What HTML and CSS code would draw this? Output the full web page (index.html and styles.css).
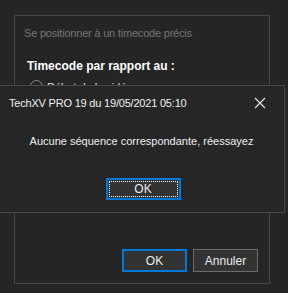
FILE: index.html
```html
<!DOCTYPE html>
<html lang="fr">
<head>
    <meta charset="UTF-8">
    <title>Se positionner à un timecode précis</title>
    <link rel="stylesheet" href="styles.css">
</head>
<body>
    <div class="panel">
        <div class="panel-title">Se positionner à un timecode précis</div>
        <div class="group-label">Timecode par rapport au :</div>
        <label class="radio-row">
            <span class="radio"></span>
            <span>Début de la vidéo</span>
        </label>
        <div class="panel-actions">
            <button class="btn btn-default">OK</button>
            <button class="btn">Annuler</button>
        </div>
    </div>

    <!-- Boîte de message par-dessus -->
    <div class="msgbox">
        <div class="msgbox-head">
            <span class="msgbox-title">TechXV PRO 19 du 19/05/2021 05:10</span>
            <svg class="msgbox-close" width="12" height="12" viewBox="0 0 12 12">
                <path d="M1 1 L11 11 M11 1 L1 11" stroke="#e0e0e0" stroke-width="1.2" fill="none"/>
            </svg>
        </div>
        <div class="msgbox-text">Aucune séquence correspondante, réessayez</div>
        <div class="msgbox-actions">
            <button class="btn btn-focus"><span class="focus-rect">OK</span></button>
        </div>
    </div>
</body>
</html>
```

FILE: styles.css
```css
body {
    margin: 0;
    padding: 15px 0 0 14px;
    width: 288px;
    height: 293px;
    box-sizing: border-box;
    background-color: #252525;
    font-family: 'Liberation Sans', Arial, sans-serif;
    font-size: 11px;
    color: #e8e8e8;
    position: relative;
    overflow: hidden;
}

.panel {
    width: 256px;
    height: 269px;
    box-sizing: border-box;
    border: 1px solid #464646;
    display: flex;
    flex-direction: column;
    padding: 9px 0 0 9px;
}

.panel-title {
    color: #767676;
    font-size: 11px;
    letter-spacing: -0.2px;
    line-height: 16px;
}

.group-label {
    font-weight: bold;
    font-size: 12px;
    color: #ffffff;
    margin: 17px 0 0 3px;
    line-height: 16px;
}

.radio-row {
    display: flex;
    align-items: center;
    gap: 4px;
    margin: 6px 0 0 6px;
    color: #e0e0e0;
}

.radio {
    width: 11px;
    height: 11px;
    border: 1px solid #8a8a8a;
    border-radius: 50%;
}

.panel-actions {
    margin-top: auto;
    display: flex;
    justify-content: flex-end;
    gap: 6px;
    padding: 0 11px 11px 0;
}

.btn {
    width: 65px;
    height: 23px;
    box-sizing: border-box;
    background-color: #333333;
    border: 1px solid #6b6b6b;
    color: #ececec;
    font-family: 'Liberation Sans', Arial, sans-serif;
    font-size: 12px;
    padding: 0;
}

.btn-default {
    border: 2px solid #0078d7;
}

.msgbox {
    position: absolute;
    left: -2px;
    top: 85px;
    width: 287px;
    height: 128px;
    box-sizing: border-box;
    background-color: #262626;
    border: 1px solid #474747;
    display: flex;
    flex-direction: column;
}

.msgbox-head {
    display: flex;
    justify-content: space-between;
    align-items: center;
    padding: 6px 18px 0 10px;
    height: 22px;
}

.msgbox-title {
    color: #f0f0f0;
    letter-spacing: -0.2px;
}

.msgbox-text {
    text-align: center;
    margin-top: 21px;
    color: #f0f0f0;
}

.msgbox-actions {
    display: flex;
    justify-content: center;
    margin-top: auto;
    padding: 0 0 12px 0;
}

.btn-focus {
    width: 75px;
    height: 22px;
    border: 2px solid #0078d7;
    padding: 1px;
    margin-left: 3px;
}

.focus-rect {
    display: flex;
    height: 100%;
    box-sizing: border-box;
    align-items: center;
    justify-content: center;
    border: 1px dotted #ffffff;
}
```
